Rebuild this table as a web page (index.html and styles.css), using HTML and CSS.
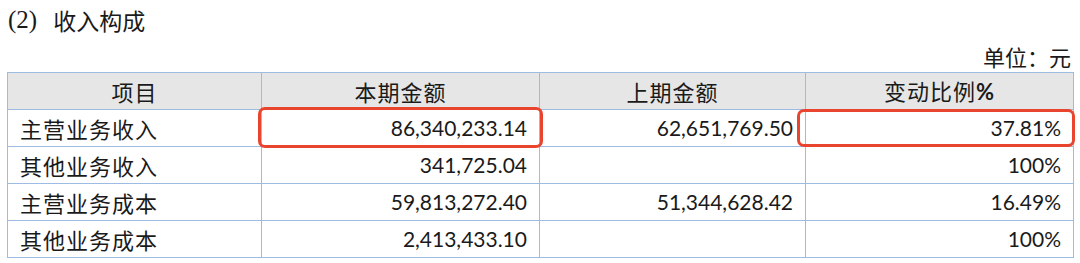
FILE: index.html
```html
<!DOCTYPE html>
<html lang="zh">
<head>
<meta charset="utf-8">
<link rel="stylesheet" href="styles.css">
</head>
<body>
<div class="page">
  <h2 class="title"><span class="paren">(2)</span><span class="title-text">收入构成</span></h2>
  <div class="unit">单位：元</div>
  <table class="data">
    <colgroup>
      <col class="c1"><col class="c2"><col class="c3"><col class="c4">
    </colgroup>
    <thead>
      <tr><th>项目</th><th>本期金额</th><th>上期金额</th><th>变动比例<b class="pct">%</b></th></tr>
    </thead>
    <tbody>
      <tr><td class="name">主营业务收入</td><td class="num hl-cell"><span class="hl hl-a"></span>86,340,233.14</td><td class="num">62,651,769.50</td><td class="num hl-cell"><span class="hl hl-b"></span>37.81%</td></tr>
      <tr><td class="name">其他业务收入</td><td class="num">341,725.04</td><td class="num"></td><td class="num">100%</td></tr>
      <tr><td class="name">主营业务成本</td><td class="num">59,813,272.40</td><td class="num">51,344,628.42</td><td class="num">16.49%</td></tr>
      <tr><td class="name">其他业务成本</td><td class="num">2,413,433.10</td><td class="num"></td><td class="num">100%</td></tr>
    </tbody>
  </table>
</div>
</body>
</html>
```

FILE: styles.css
```css
html, body {
  margin: 0;
  padding: 0;
  background: #ffffff;
}
.page {
  width: 1080px;
  height: 263px;
  overflow: hidden;
  color: #1a1a1a;
  font-family: "Noto Sans CJK SC", sans-serif;
}
.title {
  margin: 0;
  padding: 5px 0 0 8px;
  height: 30px;
  font-size: 23px;
  font-weight: 400;
  line-height: 30px;
  display: flex;
  align-items: center;
  gap: 16px;
}
.paren {
  font-family: "Liberation Serif", serif;
  font-size: 25px;
}
.unit {
  text-align: right;
  padding-right: 9px;
  font-size: 22px;
  line-height: 24px;
  height: 24px;
  margin-top: 9px;
  margin-bottom: 4px;
}
.data {
  margin-left: 7px;
  width: 1066px;
  border-collapse: collapse;
  table-layout: fixed;
  font-size: 22px;
}
.c1 { width: 254px; }
.c2 { width: 278px; }
.c3 { width: 266px; }
.c4 { width: 268px; }
.data tr { height: 37px; }
.data th, .data td {
  border: 1px solid #9dbbe3;
  padding: 0;
  line-height: 34px;
  white-space: nowrap;
  overflow: visible;
}
.data th {
  background: #e6e6e6;
  font-weight: 400;
  text-align: center;
  letter-spacing: 1px;
}
.pct { font-family: Lato, sans-serif; font-weight: 700; }
.name {
  padding-left: 12px !important;
  letter-spacing: 1px;
}
.num {
  text-align: right;
  padding-right: 12px !important;
  font-family: Lato, "Noto Sans CJK SC", sans-serif;
  font-size: 21px;
}
.hl-cell { position: relative; }
.hl {
  position: absolute;
  border: 3px solid #e8442e;
  border-radius: 7px;
  box-sizing: border-box;
  pointer-events: none;
}
.hl-a { left: -4px; top: -3px; right: -4px; bottom: -2px; }
.hl-b { left: -9px; top: -1px; right: -2px; bottom: -1px; }
```
